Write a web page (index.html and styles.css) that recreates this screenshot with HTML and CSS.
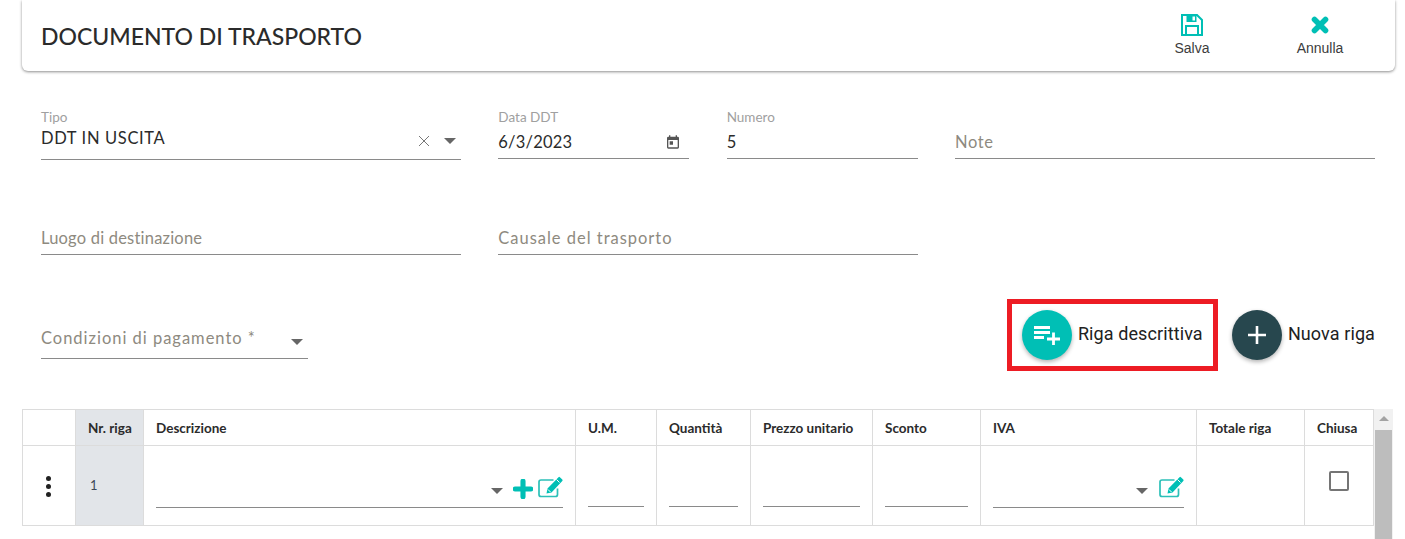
FILE: index.html
```html
<!DOCTYPE html>
<html lang="it">
<head>
<meta charset="utf-8">
<title>Documento di trasporto</title>
<link rel="stylesheet" href="styles.css">
</head>
<body>
<header class="topbar">
  <h1 class="title">DOCUMENTO DI TRASPORTO</h1>
  <div class="actions">
    <button class="action">
      <svg class="action-icon" viewBox="0 0 24 24" width="24" height="24"><path fill="none" stroke="#00bfb5" stroke-width="2" d="M2 2h15l5 5v15H2z"/><path fill="#00bfb5" d="M6.500 2h10v7h-10z"/><path fill="#fff" d="M12.500 3.500h2.500v4h-2.500z"/><path fill="none" stroke="#00bfb5" stroke-width="2" d="M6 22v-9h12v9"/></svg>
      <span>Salva</span>
    </button>
    <button class="action">
      <svg class="action-icon" viewBox="0 0 24 24" width="24" height="24"><path fill="none" stroke="#00bfb5" stroke-width="5.600" stroke-linecap="round" d="M6.500 6.500l11 11M17.500 6.500l-11 11"/></svg>
      <span>Annulla</span>
    </button>
  </div>
</header>

<main class="form">
  <div class="row row-one">
    <div class="field field-select">
      <label class="float">Tipo</label>
      <div class="value value-select"><span class="caps">DDT IN USCITA</span>
        <svg class="clear" viewBox="0 0 12 12" width="12" height="12"><path d="M1 1l10 10M11 1L1 11" stroke="#777" stroke-width="1" fill="none"/></svg>
        <i class="caret"></i>
      </div>
    </div>
    <div class="field">
      <label class="float">Data DDT</label>
      <div class="value">6/3/2023
        <svg class="cal" viewBox="0 0 24 24" width="16" height="16"><path fill="#555" d="M19 4h-1V2h-2v2H8V2H6v2H5a2 2 0 0 0-2 2v14a2 2 0 0 0 2 2h14a2 2 0 0 0 2-2V6a2 2 0 0 0-2-2zm0 16H5V9h14zM7 11h5v5H7z"/></svg>
      </div>
    </div>
    <div class="field">
      <label class="float">Numero</label>
      <div class="value">5</div>
    </div>
    <div class="field"><div class="value placeholder note">Note</div></div>
  </div>

  <div class="row row-two">
    <div class="field"><div class="value placeholder">Luogo di destinazione</div></div>
    <div class="field span-two"><div class="value placeholder wide">Causale del trasporto</div></div>
  </div>

  <div class="row-three">
    <div class="field pay">
      <div class="value placeholder wide">Condizioni di pagamento *<i class="caret"></i></div>
    </div>
    <div class="fabs">
      <div class="fab-box">
        <div class="fab fab-teal">
          <svg viewBox="0 0 26 20" width="26" height="20"><path d="M0 2.500h16M0 7.500h16M0 12.500h10M13 14h13M19.500 7.500v13" stroke="#fff" stroke-width="2.800" fill="none"/></svg>
        </div>
        <span class="fab-label">Riga descrittiva</span>
      </div>
      <div class="fab-plain">
        <div class="fab fab-dark">
          <svg viewBox="0 0 20 20" width="20" height="20"><path d="M1 10h18M10 1v18" stroke="#fff" stroke-width="2.600" fill="none"/></svg>
        </div>
        <span class="fab-label">Nuova riga</span>
      </div>
    </div>
  </div>

  <div class="table-wrap">
    <table class="grid">
      <colgroup>
        <col class="c0"><col class="c1"><col class="c2"><col class="c3"><col class="c4"><col class="c5"><col class="c6"><col class="c7"><col class="c8"><col class="c9">
      </colgroup>
      <thead>
        <tr>
          <th></th><th class="shade">Nr. riga</th><th>Descrizione</th><th>U.M.</th><th>Quantità</th><th>Prezzo unitario</th><th>Sconto</th><th>IVA</th><th>Totale riga</th><th>Chiusa</th>
        </tr>
      </thead>
      <tbody>
        <tr>
          <td class="menu"><span class="dots"><i></i><i></i><i></i></span></td>
          <td class="shade num">1</td>
          <td><div class="cell-input">
            <i class="caret"></i>
            <svg class="plus" viewBox="0 0 18 18" width="20" height="20"><path d="M2 9h14M9 2v14" stroke="#00bfb5" stroke-width="4.600" stroke-linecap="round" fill="none"/></svg>
            <svg class="edit" viewBox="0 0 25 22" width="25" height="22"><use href="#edit"/></svg>
          </div></td>
          <td><div class="cell-line"></div></td>
          <td><div class="cell-line"></div></td>
          <td><div class="cell-line"></div></td>
          <td><div class="cell-line"></div></td>
          <td><div class="cell-input">
            <i class="caret"></i>
            <svg class="edit" viewBox="0 0 25 22" width="25" height="22"><use href="#edit"/></svg>
          </div></td>
          <td></td>
          <td class="check-cell"><span class="check"></span></td>
        </tr>
      </tbody>
    </table>
    <div class="scrollbar"><i class="sb-arrow"></i><div class="sb-thumb"></div></div>
  </div>
</main>

<svg class="defs" width="0" height="0">
  <defs>
    <g id="edit">
      <path d="M19.500 12.500v6a2 2 0 0 1-2 2H3a2 2 0 0 1-2-2V6a2 2 0 0 1 2-2h12.500" fill="none" stroke="#2cc0b8" stroke-width="1.700"/>
      <path d="M8.500 17.500l1-5L20.500 1.200a1 1 0 0 1 1.400 0l2.400 2.400a1 1 0 0 1 0 1.400L13.500 16.500z" fill="#00bfb5"/>
      <path d="M10 13.500l2.500 2.500M18.500 3.500l3 3" stroke="#fff" stroke-width="1" fill="none"/>
    </g>
  </defs>
</svg>
</body>
</html>
```
FILE: styles.css
```css
* { box-sizing: border-box; }
html, body { margin: 0; height: 539px; overflow: hidden; background: #fff; }
body { font-family: "Lato", "Liberation Sans", sans-serif; color: #212121; }
i { display: block; }

.topbar {
  margin: 0 10px 0 22px;
  height: 71px;
  padding: 0 39px 0 19px;
  display: flex;
  align-items: center;
  justify-content: space-between;
  background: #fff;
  border-radius: 0 0 6px 6px;
  box-shadow: 0 1px 3px rgba(0,0,0,.45);
}
.title { margin: 0; font-size: 23px; font-weight: 500; color: #2b2b2b; }
.actions { display: flex; gap: 56px; margin-top: -3px; }
.action {
  display: flex; flex-direction: column; align-items: center; gap: 3px;
  width: 72px; padding: 0; border: 0; background: none;
  font: 14px "Liberation Sans", sans-serif; color: #3c3c3c;
}
.action-icon { display: block; }

.form { padding: 0 30px 0 41px; }
.row { display: grid; grid-template-columns: 420px 191px 191px 420px; column-gap: 37.330px; }
.row-one { margin-top: 38px; height: 50px; align-items: end; }
.row-two { margin-top: 46px; height: 50px; align-items: end; }
.span-two { grid-column: span 2; width: 420px; }
.field { position: relative; border-bottom: 1px solid #8a8a8a; height: 50px; display: flex; flex-direction: column; justify-content: flex-end; }
.float { position: absolute; left: 0; top: 0; font-size: 13.500px; color: #a0a0a0; line-height: 16px; }
.value { display: flex; align-items: center; height: 32px; font-size: 16.500px; color: #2b2b2b; letter-spacing: .2px; }
.value-select { height: 38px; padding-bottom: 4px; }
.caps { letter-spacing: .65px; }
.field-select { height: 51px; margin-bottom: -1px; }
.placeholder { color: #8e8a80; font-size: 16.500px; }
.note { letter-spacing: .6px; }
.wide { letter-spacing: .98px; }
.clear { margin-left: auto; margin-right: 14px; margin-top: 5px; }
.caret { width: 0; height: 0; border: 6px solid transparent; border-top: 6px solid #666; border-bottom: 0; }
.value-select .caret { margin-right: 5px; margin-top: 5px; }
.cal { margin-left: auto; margin-right: 8px; }

.row-three { display: flex; justify-content: space-between; margin-top: 44px; height: 110px; }
.pay { width: 267px; height: 60px; }
.pay .value { height: 30px; padding-bottom: 4px; align-items: flex-start; }
.pay .caret { margin-left: auto; margin-right: 5px; margin-top: 11px; }
.fabs { display: flex; align-items: flex-start; }
.fab-box {
  display: flex; align-items: center; gap: 6px;
  width: 211px; height: 72px; padding: 0 0 0 10px;
  border: 5px solid #ed1c24;
}
.fab-plain { display: flex; align-items: center; gap: 6px; margin-left: 14px; height: 72px; }
.fab {
  width: 50px; height: 50px; border-radius: 50%; flex: none;
  display: flex; align-items: center; justify-content: center;
  box-shadow: 0 2px 4px rgba(0,0,0,.3);
}
.fab-teal { background: #00bfb5; }
.fab-dark { background: #27474e; }
.fab-label { font: 18px "Roboto", "Liberation Sans", sans-serif; letter-spacing: .1px; color: #212121; margin-top: -4px; white-space: nowrap; }

.table-wrap { display: flex; align-items: flex-start; margin: 0 -18px 0 -19px; }
.grid {
  width: 1351px; flex: none; table-layout: fixed; border-collapse: collapse;
  font-size: 13.500px; border: 1px solid #dcdcdc;
  height: 116px;
}
.grid th, .grid td { border: 1px solid #dcdcdc; padding: 0; }
.grid th { height: 36px; text-align: left; padding-left: 12px; font-weight: 700; color: #2b2b2b; white-space: nowrap; }
.c0 { width: 53px; } .c1 { width: 68px; } .c2 { width: 432px; } .c3 { width: 81px; }
.c4 { width: 94px; } .c5 { width: 122px; } .c6 { width: 108px; } .c7 { width: 216px; }
.c8 { width: 108px; } .c9 { width: 69px; }
.grid .shade { background: #e2e5e9; }
.grid td { height: 80px; vertical-align: top; }
.grid .num { padding: 31px 0 0 14px; font-size: 13px; color: #3c4858; }
.menu { text-align: center; }
.dots { display: inline-flex; flex-direction: column; gap: 3px; margin: 30px 2px 0 0; }
.dots i { width: 5px; height: 5px; border-radius: 50%; background: #212121; }
.cell-input {
  display: flex; align-items: center; justify-content: flex-end;
  margin: 28px 12px 0 12px; height: 34px; border-bottom: 1px solid #8a8a8a; padding-bottom: 4px;
}
.cell-input .caret { margin: 5px 11px 0 0; }
.plus, .edit { display: block; flex: none; }
.plus { margin: 0 5px 0 -1px; }
.edit { margin: -4px 0 0 0; }
.cell-line { margin: 33px 12px 0 12px; height: 28px; border-bottom: 1px solid #8a8a8a; }
.check-cell { text-align: center; }
.check { display: inline-block; width: 20px; height: 20px; border: 2px solid #757575; border-radius: 2px; margin-top: 25px; }

.scrollbar { width: 20px; height: 130px; background: #f1f1f1; display: flex; flex-direction: column; align-items: center; }
.sb-arrow { margin-top: 7px; width: 0; height: 0; border: 5px solid transparent; border-bottom: 5px solid #a3a3a3; border-top: 0; }
.sb-thumb { margin-top: 9px; width: 17px; flex: 1; background: #bdbdbd; }
.defs { position: absolute; }
```
